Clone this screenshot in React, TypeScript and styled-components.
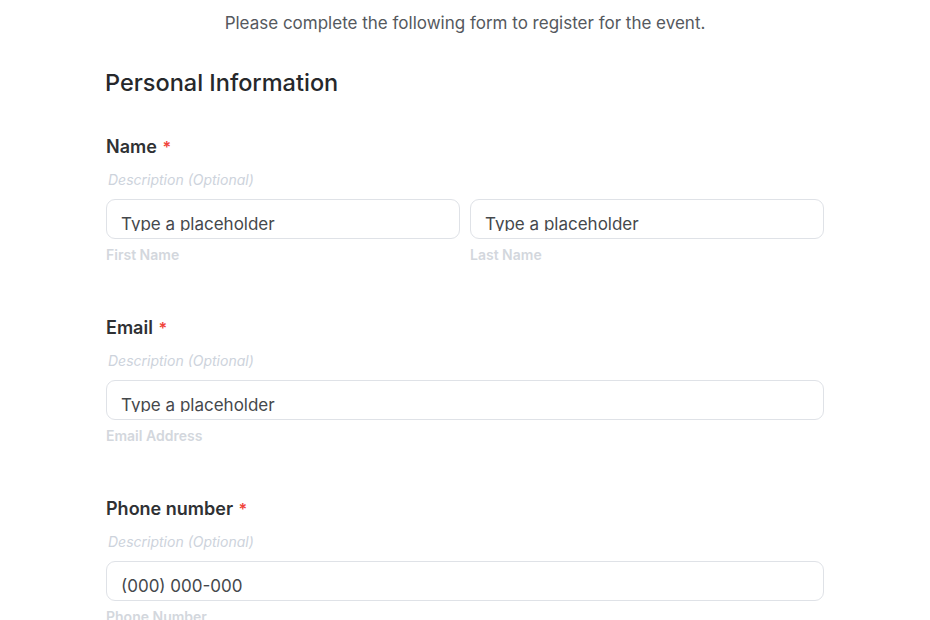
import styled, { createGlobalStyle } from "styled-components";

const GlobalStyle = createGlobalStyle`
  body {
    margin: 0;
    background: #ffffff;
    font-family: Inter, "Noto Sans", sans-serif;
    color: #333333;
  }
`;

type FieldProps = {
  label: string;
  inputs: { value: string; caption: string }[];
};

function Field({ label, inputs }: FieldProps) {
  return (
    <FieldBlock>
      <Label>
        {label} <Required>*</Required>
      </Label>
      <Description>Description (Optional)</Description>
      <InputRow>
        {inputs.map((input) => (
          <InputCol key={input.caption}>
            <InputBox>
              <InputValue>{input.value}</InputValue>
            </InputBox>
            <Caption>{input.caption}</Caption>
          </InputCol>
        ))}
      </InputRow>
    </FieldBlock>
  );
}

export default function App() {
  return (
    <>
      <GlobalStyle />
      <Page>
        <Subtitle>
          Please complete the following form to register for the event.
        </Subtitle>
        <Form>
          <Heading>Personal Information</Heading>
          <Field
            label="Name"
            inputs={[
              { value: "Type a placeholder", caption: "First Name" },
              { value: "Type a placeholder", caption: "Last Name" },
            ]}
          />
          <Field
            label="Email"
            inputs={[{ value: "Type a placeholder", caption: "Email Address" }]}
          />
          <Field
            label="Phone number"
            inputs={[{ value: "(000) 000-000", caption: "Phone Number" }]}
          />
        </Form>
      </Page>
    </>
  );
}

const Page = styled.div`
  width: 930px;
  height: 620px;
  overflow: hidden;
  padding-top: 13px;
  box-sizing: border-box;
`;

const Subtitle = styled.p`
  margin: 0;
  text-align: center;
  font-size: 17px;
  line-height: 20px;
  color: #55595e;
`;

const Form = styled.div`
  width: 718px;
  margin: 35px 0 0 106px;
  display: flex;
  flex-direction: column;
`;

const Heading = styled.h2`
  margin: 0 0 0 -1px;
  font-size: 23.5px;
  line-height: 30px;
  font-weight: 500;
  color: #26282b;
`;

const FieldBlock = styled.div`
  display: flex;
  flex-direction: column;
  margin-top: 37px;

  & + & {
    margin-top: 52px;
  }
`;

const Label = styled.div`
  font-size: 18px;
  line-height: 24px;
  font-weight: 600;
  color: #2f3134;
`;

const Required = styled.span`
  color: #f0443a;
  font-size: 16px;
  vertical-align: top;
  margin-left: 1px;
`;

const Description = styled.div`
  font-size: 14px;
  line-height: 20px;
  font-style: italic;
  color: #cdd3dc;
  margin: 11px 0 0 2px;
`;

const InputRow = styled.div`
  display: flex;
  gap: 10px;
  margin-top: 9px;
`;

const InputCol = styled.div`
  flex: 1;
  display: flex;
  flex-direction: column;
`;

const InputBox = styled.div`
  height: 40px;
  box-sizing: border-box;
  border: 1px solid #dfe2e7;
  border-radius: 9px;
  padding: 0 14px;
  background: #ffffff;
`;

const InputValue = styled.div`
  height: 31px;
  overflow: hidden;
  padding-top: 14px;
  box-sizing: border-box;
  font-size: 17px;
  line-height: 20px;
  color: #45484c;
`;

const Caption = styled.div`
  margin-top: 7px;
  font-size: 14px;
  line-height: 18px;
  font-weight: 600;
  color: #d3d7dd;
`;
